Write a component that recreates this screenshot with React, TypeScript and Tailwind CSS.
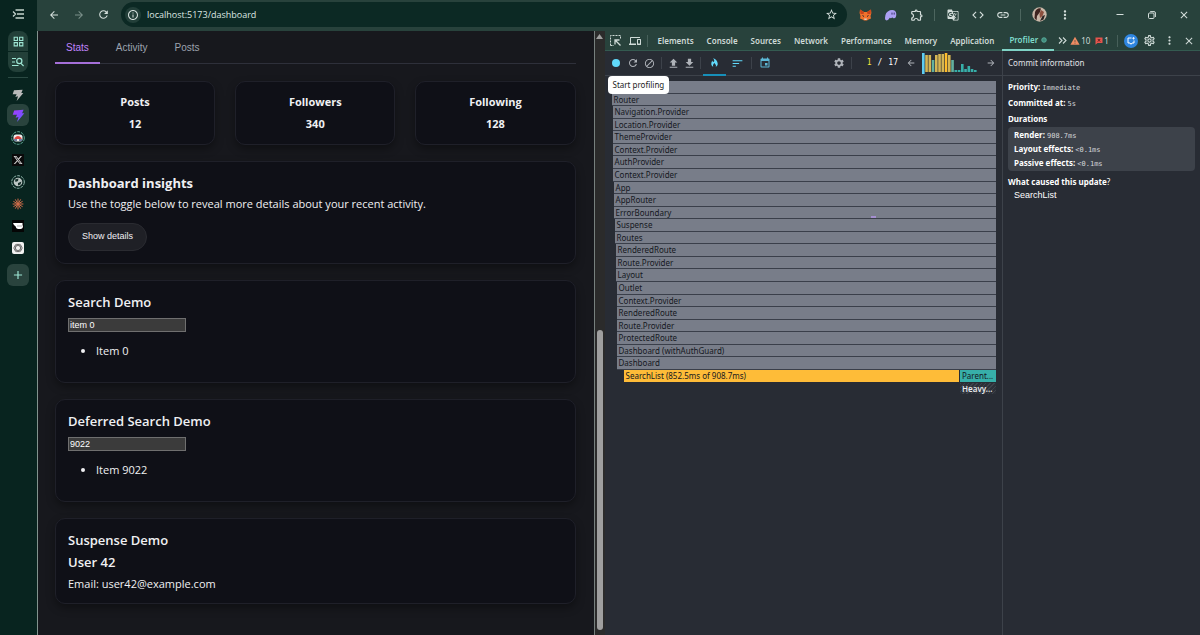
import { useState } from 'react';
import type { ReactNode } from 'react';
import clsx from 'clsx';
import {
  MdAdd,
  MdArrowBack,
  MdArrowForward,
  MdBlock,
  MdClose,
  MdCode,
  MdDevices,
  MdEvent,
  MdFileDownload,
  MdFileUpload,
  MdGTranslate,
  MdInfoOutline,
  MdLink,
  MdMoreVert,
  MdOutlineExtension,
  MdOutlineGridView,
  MdOutlineSettings,
  MdRefresh,
  MdSettings,
  MdSort,
  MdStarBorder,
  MdWarning,
} from 'react-icons/md';
import { FaXTwitter } from 'react-icons/fa6';

const BOLT = 'M3 2 L16 1 L14 6 L17 6 L7 18 L9 11 L5 12 L7 8 L1 8 Z';

const devtoolsTabs = [
  'Elements',
  'Console',
  'Sources',
  'Network',
  'Performance',
  'Memory',
  'Application',
];

const flameRows = [
  { name: '', indent: 'ml-0' },
  { name: 'Router', indent: 'ml-0' },
  { name: 'Navigation.Provider', indent: 'ml-px' },
  { name: 'Location.Provider', indent: 'ml-px' },
  { name: 'ThemeProvider', indent: 'ml-px' },
  { name: 'Context.Provider', indent: 'ml-px' },
  { name: 'AuthProvider', indent: 'ml-px' },
  { name: 'Context.Provider', indent: 'ml-px' },
  { name: 'App', indent: 'ml-0.5' },
  { name: 'AppRouter', indent: 'ml-0.5' },
  { name: 'ErrorBoundary', indent: 'ml-0.5' },
  { name: 'Suspense', indent: 'ml-[3px]' },
  { name: 'Routes', indent: 'ml-[3px]' },
  { name: 'RenderedRoute', indent: 'ml-1' },
  { name: 'Route.Provider', indent: 'ml-1' },
  { name: 'Layout', indent: 'ml-1' },
  { name: 'Outlet', indent: 'ml-[5px]' },
  { name: 'Context.Provider', indent: 'ml-[5px]' },
  { name: 'RenderedRoute', indent: 'ml-[5px]' },
  { name: 'Route.Provider', indent: 'ml-[5px]' },
  { name: 'ProtectedRoute', indent: 'ml-[5px]' },
  { name: 'Dashboard (withAuthGuard)', indent: 'ml-[5px]' },
  { name: 'Dashboard', indent: 'ml-[5px]' },
];

const commits = [20, 17, 17, 12, 17, 18, 18, 19, 17, 12, 2, 2, 8, 3, 6, 3, 2];

const stats = [
  { label: 'Posts', value: 12 },
  { label: 'Followers', value: 340 },
  { label: 'Following', value: 128 },
];

function IconButton({
  label,
  className,
  children,
}: {
  label: string;
  className: string;
  children: ReactNode;
}) {
  return (
    <button
      aria-label={label}
      className={clsx('flex shrink-0 items-center justify-center', className)}
    >
      {children}
    </button>
  );
}

function Divider({ className }: { className: string }) {
  return <span className={clsx('h-3 w-px shrink-0', className)} />;
}

function Rail() {
  return (
    <nav className="flex w-[37px] shrink-0 flex-col items-center bg-[#08241f] pr-px text-[#9ee6d4]">
      <IconButton label="Expand tabs" className="h-[31px] w-full pb-[3px] text-[#c3d3cd]">
        <svg width="12" height="10" viewBox="0 0 12 10" fill="none" stroke="currentColor" strokeWidth="1.3">
          <path d="M1 2.5 L3.5 5 L1 7.5 M3.5 1 H12 M5 5 H12 M3.5 9 H12" />
        </svg>
      </IconButton>
      <div className="flex w-5 flex-col gap-px overflow-hidden rounded-lg">
        <IconButton label="Tab groups" className="h-5 bg-[#234039]">
          <MdOutlineGridView size={13} />
        </IconButton>
        <IconButton label="Search tabs" className="h-5 bg-[#234039]">
          <svg width="12" height="10" viewBox="0 0 12 10" fill="none" stroke="currentColor" strokeWidth="1.2">
            <path d="M0 1.5 H4 M0 5 H3 M0 8.5 H6.5 M9 6.3 L11.6 9" />
            <circle cx="7.3" cy="4" r="2.6" />
          </svg>
        </IconButton>
      </div>
      <span className="mt-[5px] mb-1 h-px w-5 bg-[#2b4a43]" />
      <div className="flex flex-col gap-px">
        <IconButton label="Vite app" className="h-[21px] w-[22px] pt-1">
          <svg width="12" height="12" viewBox="0 0 18 18">
            <path d={BOLT} fill="#b9b9b9" />
          </svg>
        </IconButton>
        <IconButton label="Dashboard" className="h-[22px] w-[22px] rounded-md bg-[#29433d]">
          <svg width="13" height="13" viewBox="0 0 18 18">
            <defs>
              <linearGradient id="bolt" x1="0" y1="0" x2="1" y2="1">
                <stop offset="0" stopColor="#a63cff" />
                <stop offset="0.6" stopColor="#7c4dff" />
                <stop offset="1" stopColor="#47bfff" />
              </linearGradient>
            </defs>
            <path d={BOLT} fill="url(#bolt)" />
          </svg>
        </IconButton>
        <IconButton label="Discord" className="h-[21px] w-[22px]">
          <svg width="14" height="14" viewBox="0 0 14 14">
            <circle cx="7" cy="7" r="6.3" fill="none" stroke="#5fa593" strokeDasharray="3 1" />
            <rect x="2.5" y="3.5" width="9" height="7" rx="2.5" fill="#f1eeee" />
            <path d="M3.5 7 Q7 3 10.5 7 V8 H3.5 Z" fill="#e0453f" />
            <path d="M3 9 H11" stroke="#475a86" strokeWidth="1.4" strokeDasharray="3 2" />
          </svg>
        </IconButton>
        <IconButton label="X" className="h-[21px] w-[22px]">
          <span className="flex size-3 items-center justify-center bg-[#0a0a0a] text-[#d6d6d6]">
            <FaXTwitter size={10} />
          </span>
        </IconButton>
        <IconButton label="GitHub" className="h-[21px] w-[22px]">
          <svg width="14" height="14" viewBox="0 0 14 14">
            <circle cx="7" cy="7" r="6.3" fill="none" stroke="#8fb5ab" strokeDasharray="3 1" />
            <circle cx="7" cy="7" r="4.3" fill="#bcc6c4" />
            <path d="M4 4.5 L7.5 3.5 L7 6 L4.5 7 Z M7 8 L10.5 6.5 L9.5 9.5 L7 10.5 Z" fill="#17302b" />
          </svg>
        </IconButton>
        <IconButton label="Claude" className="h-[21px] w-[22px]">
          <svg width="12" height="12" viewBox="-6 -6 12 12" stroke="#cf6d4a" strokeWidth="1" strokeLinecap="round">
            <path d="M0 -5 V5 M-5 0 H5 M-4.3 -2.5 L4.3 2.5 M-4.3 2.5 L4.3 -2.5 M-2.5 -4.3 L2.5 4.3 M2.5 -4.3 L-2.5 4.3" />
          </svg>
        </IconButton>
        <IconButton label="Zed" className="h-[21px] w-[22px]">
          <svg width="12" height="12" viewBox="0 0 12 12">
            <rect width="12" height="12" fill="#050505" />
            <path d="M1 3 H10.5 V5.4 H11 V7 Q10.5 9 8.5 9 H6 Q4 8.6 3.5 6.2 Q1.6 5.4 1 3 Z" fill="#fff" />
            <path d="M5 6 H10.5" stroke="#777" strokeWidth="0.6" />
          </svg>
        </IconButton>
        <IconButton label="ChatGPT" className="h-[21px] w-[22px]">
          <svg width="12" height="12" viewBox="0 0 12 12">
            <rect width="12" height="12" rx="2" fill="#f2f2f2" />
            <g fill="none" stroke="#444" strokeWidth="0.6">
              <ellipse cx="6" cy="6" rx="4.2" ry="2.4" />
              <ellipse cx="6" cy="6" rx="4.2" ry="2.4" transform="rotate(60 6 6)" />
              <ellipse cx="6" cy="6" rx="4.2" ry="2.4" transform="rotate(120 6 6)" />
            </g>
          </svg>
        </IconButton>
      </div>
      <IconButton label="New tab" className="mt-1.5 size-[22px] rounded-md bg-[#29433d]">
        <MdAdd size={14} />
      </IconButton>
    </nav>
  );
}

function BrowserBar() {
  return (
    <header className="flex h-[31px] shrink-0 items-center bg-[#28423c] pb-0.5 text-[#d5dfdc]">
      <IconButton label="Back" className="ml-1 w-[25px]">
        <MdArrowBack size={12} />
      </IconButton>
      <IconButton label="Forward" className="w-[25px] text-[#7a8f89]">
        <MdArrowForward size={12} />
      </IconButton>
      <IconButton label="Reload" className="w-[25px]">
        <MdRefresh size={13} />
      </IconButton>
      <div className="ml-[5px] flex h-[25px] flex-1 items-center rounded-full bg-[#0c2924] px-1">
        <IconButton label="Site information" className="size-4 rounded-full bg-[#233f39]">
          <MdInfoOutline size={12} />
        </IconButton>
        <input
          aria-label="Address"
          defaultValue="localhost:5173/dashboard"
          className="ml-1.5 min-w-0 flex-1 bg-transparent text-[9px] text-[#dce5e2] outline-none"
        />
        <IconButton label="Bookmark" className="w-6">
          <MdStarBorder size={13} />
        </IconButton>
      </div>
      <IconButton label="MetaMask" className="ml-1.5 w-[25px]">
        <svg width="13" height="12" viewBox="0 0 13 12">
          <path d="M1 0.5 L5 3 H8 L12 0.5 L12.4 4 L11.5 7 L12 9.5 L9.5 10.5 L8 11.5 H5 L3.5 10.5 L1 9.5 L1.5 7 L0.6 4 Z" fill="#f0712c" />
          <path d="M1 0.5 L5 3 L4.5 5 L1.5 5 Z M12 0.5 L8 3 L8.5 5 L11.5 5 Z" fill="#c9431a" />
          <path d="M3.5 6.5 L5 7.5 M9.5 6.5 L8 7.5" stroke="#23283a" />
          <path d="M5 9.5 H8 L7.5 11 H5.5 Z" fill="#d9ccbf" />
        </svg>
      </IconButton>
      <IconButton label="Phantom" className="w-[25px]">
        <svg width="13" height="12" viewBox="0 0 13 12">
          <path d="M1 9 Q1 3 6 1.2 Q12 0 12.3 5 Q12.3 9.5 9.8 9.3 Q8.6 9 8.3 8.2 Q7 10 5.8 8.8 Q3.6 12.4 1.6 11 Q1 10.4 1 9 Z" fill="#ab9ff2" />
          <path d="M8 3.6 V5.6 M10.2 3.6 V5.6" stroke="#3b3570" />
        </svg>
      </IconButton>
      <IconButton label="Extensions" className="w-[27px]">
        <MdOutlineExtension size={14} />
      </IconButton>
      <Divider className="mx-1 bg-[#4d665f]" />
      <IconButton label="Translate" className="ml-px w-[25px]">
        <MdGTranslate size={12} />
      </IconButton>
      <IconButton label="View source" className="w-[25px]">
        <MdCode size={14} />
      </IconButton>
      <IconButton label="Copy link" className="w-[25px]">
        <MdLink size={14} />
      </IconButton>
      <Divider className="mx-[5px] bg-[#4d665f]" />
      <IconButton label="Profile" className="w-[27px]">
        <svg width="15" height="15" viewBox="0 0 15 15">
          <circle cx="7.5" cy="7.5" r="7.2" fill="#c9b7a8" />
          <path d="M3 5 Q5 0.5 9 1.5 L8 5 L5 9 L4.5 13.5 L2.5 11 Z" fill="#3f2420" />
          <path d="M9 3 L12 5 L10.5 9 L8 11 L7.5 7 Z" fill="#8c4f3e" />
          <path d="M10.5 9 L13 8 L11.5 12.5 L8 14 Z" fill="#2d2524" />
        </svg>
      </IconButton>
      <IconButton label="Menu" className="w-6">
        <MdMoreVert size={14} />
      </IconButton>
      <IconButton label="Minimize" className="ml-[27px] w-8">
        <svg width="8" height="8" viewBox="0 0 8 8" stroke="currentColor">
          <path d="M0.5 3.5 H7.5" />
        </svg>
      </IconButton>
      <IconButton label="Restore" className="w-8">
        <svg width="8" height="8" viewBox="0 0 8 8" fill="none" stroke="currentColor">
          <rect x="0.5" y="2" width="5.5" height="5.5" rx="1" />
          <path d="M2.2 0.6 H6 Q7.4 0.6 7.4 2 V6" />
        </svg>
      </IconButton>
      <IconButton label="Close window" className="w-8">
        <MdClose size={12} />
      </IconButton>
    </header>
  );
}

function Card({ className, children }: { className?: string; children: ReactNode }) {
  return (
    <section
      className={clsx(
        'rounded-[10px] border border-[#1f2029] bg-[#0f1017] px-3 shadow-[0_4px_8px_rgba(0,0,0,0.35)]',
        className,
      )}
    >
      {children}
    </section>
  );
}

function SearchCard({ title, initial, result }: { title: string; initial: string; result: string }) {
  const [query, setQuery] = useState(initial);

  return (
    <Card className="pt-3 pb-[22px]">
      <h2 className="text-[13px] leading-[18px] font-semibold">{title}</h2>
      <input
        aria-label={title}
        value={query}
        onChange={(e) => setQuery(e.target.value)}
        className="mt-[7px] block h-3.5 w-[118px] border border-[#6f6f6f] bg-[#3b3b3b] px-px font-['Liberation_Sans',sans-serif] text-[9px] text-white outline-none"
      />
      <ul className="mt-2.5 list-disc pl-7 text-[11px] leading-[18px]">
        <li>{result}</li>
      </ul>
    </Card>
  );
}

function DashboardPage() {
  const [tab, setTab] = useState('Stats');

  return (
    <main className="pr-[18px] pl-[17px] text-[#f0f0f3]">
      <div className="flex gap-[5px] border-b border-[#2e303a] font-['Liberation_Sans',sans-serif] text-[10px]">
        {['Stats', 'Activity', 'Posts'].map((name) => (
          <button
            key={name}
            onClick={() => setTab(name)}
            className={clsx(
              '-mb-px border-b-2 px-[11px] pt-2.5 pb-[7px] leading-[14px]',
              tab === name ? 'border-[#a56fd8] text-[#c084fc]' : 'border-transparent text-[#9ca3af]',
            )}
          >
            {name}
          </button>
        ))}
      </div>

      <div className="mt-[17px] grid grid-cols-3 gap-5 text-center text-[11px] leading-[22px] font-bold">
        {stats.map((s) => (
          <Card key={s.label} className="py-[9px]">
            <div>{s.label}</div>
            <div>{s.value}</div>
          </Card>
        ))}
      </div>

      <div className="mt-4 flex flex-col gap-4">
        <Card className="py-3">
          <h2 className="text-[13px] leading-[18px] font-bold">Dashboard insights</h2>
          <p className="mt-[3px] text-[11px] leading-[18px]">
            Use the toggle below to reveal more details about your recent activity.
          </p>
          <button className="mt-2.5 h-7 rounded-full border border-[#2a2b31] bg-[#1f2026] px-[13px] font-['Liberation_Sans',sans-serif] text-[9px]">
            Show details
          </button>
        </Card>
        <SearchCard title="Search Demo" initial="item 0" result="Item 0" />
        <SearchCard title="Deferred Search Demo" initial="9022" result="Item 9022" />
        <Card className="flex flex-col gap-1 pt-3 pb-2.5">
          <h2 className="text-[13px] leading-[18px] font-semibold">Suspense Demo</h2>
          <h3 className="text-[13px] leading-[18px] font-semibold">User 42</h3>
          <p className="text-[11px] leading-[18px]">Email: user42@example.com</p>
        </Card>
      </div>
    </main>
  );
}

function DevtoolsTabs() {
  return (
    <div className="flex h-5 shrink-0 items-center border-b border-[#345a50] bg-[#28423c] text-[8px] font-semibold text-[#cfdad7]">
      <IconButton label="Inspect" className="ml-px w-5">
        <svg width="11" height="11" viewBox="0 0 11 11" fill="none" stroke="currentColor">
          <path d="M0.5 10.5 V0.5 H10.5 V4" strokeDasharray="2 1" />
          <path d="M0.5 10.5 H4" strokeDasharray="2 1" />
          <path d="M10.5 10.5 L5 5 M5 9.5 V5 H9.5" strokeWidth="1.3" />
        </svg>
      </IconButton>
      <IconButton label="Device toolbar" className="w-[18px]">
        <MdDevices size={12} />
      </IconButton>
      <Divider className="mx-[3px] bg-[#47605a]" />
      {devtoolsTabs.map((name) => (
        <button key={name} className="h-full pr-1.5 pl-[7px]">
          {name}
        </button>
      ))}
      <button className="-mb-px ml-0.5 flex h-5 items-center gap-[3px] border-b-2 border-[#7fd3c6] px-[7px] text-[#7fdccb]">
        Profiler
        <svg width="6" height="6" viewBox="0 0 6 6">
          <circle cx="3" cy="3" r="2.3" fill="#3f8c7c" stroke="#5fb5a4" strokeWidth="0.8" />
        </svg>
      </button>
      <IconButton label="More tabs" className="w-4">
        <svg width="9" height="7" viewBox="0 0 9 7" fill="none" stroke="currentColor" strokeWidth="1.1">
          <path d="M1 0.5 L4 3.5 L1 6.5 M5 0.5 L8 3.5 L5 6.5" />
        </svg>
      </IconButton>
      <div className="ml-auto flex items-center gap-px font-normal">
        <MdWarning size={10} className="text-[#ef8b62]" />
        <span>10</span>
        <svg width="8" height="8" viewBox="0 0 8 8" className="ml-1">
          <path d="M0.5 0.5 H7.5 V6 H2.5 L0.5 7.8 Z" fill="#e4554d" />
          <path d="M2.8 2 L5.2 4.6 M5.2 2 L2.8 4.6" stroke="#5c1d1d" />
        </svg>
        <span>1</span>
      </div>
      <Divider className="mr-1 ml-2 bg-[#47605a]" />
      <IconButton label="AI assistance" className="mx-0.5 size-3.5 rounded-full bg-[#2f86e0] text-white">
        <svg width="8" height="8" viewBox="0 0 8 8" fill="none" stroke="currentColor">
          <path d="M4.5 1 H1 V6 H3 L4 7.3 L5 6 H7 V3.5" />
          <path d="M6.5 0 V2.6 M5.2 1.3 H7.8" strokeWidth="0.8" />
        </svg>
      </IconButton>
      <IconButton label="DevTools settings" className="w-5">
        <MdOutlineSettings size={13} />
      </IconButton>
      <IconButton label="DevTools menu" className="w-5">
        <MdMoreVert size={13} />
      </IconButton>
      <IconButton label="Close DevTools" className="mr-1 w-[18px]">
        <MdClose size={12} />
      </IconButton>
    </div>
  );
}

function CommitChart() {
  return (
    <svg width="56" height="22" viewBox="0 0 56 22">
      {commits.map((height, i) => (
        <rect
          key={i}
          x={i * 3.25}
          y={i === 0 ? 1 : 20 - height}
          width="2.6"
          height={i === 0 ? 21 : height}
          fill={i === 0 ? '#5ecdf2' : i === 7 ? '#febc2c' : height > 15 ? '#d4b553' : height > 10 ? '#63b19e' : '#37afa9'}
        />
      ))}
    </svg>
  );
}

function ProfilerToolbar() {
  return (
    <div className="relative flex h-[25px] shrink-0 items-center border-b border-[#3d424a] text-[#afb3b9]">
      <IconButton label="Start profiling" className="ml-[3px] w-[17px]">
        <span className="size-2 rounded-full bg-[#61dafb]" />
      </IconButton>
      <IconButton label="Reload and start profiling" className="w-4">
        <MdRefresh size={12} />
      </IconButton>
      <IconButton label="Clear profiling data" className="w-[17px]">
        <MdBlock size={11} />
      </IconButton>
      <Divider className="mx-[3px] bg-[#3d424a]" />
      <IconButton label="Load profile" className="w-[17px]">
        <MdFileUpload size={13} />
      </IconButton>
      <IconButton label="Save profile" className="w-4">
        <MdFileDownload size={13} />
      </IconButton>
      <Divider className="mx-0.5 bg-[#3d424a]" />
      <IconButton label="Flamegraph" className="-mb-px h-[25px] w-[23px] border-b-2 border-[#178fb9] text-[#61dafb]">
        <svg width="11" height="11" viewBox="0 0 24 24" fill="currentColor">
          <path d="M10 21.5 C7.1 20.7 5 18 5 15 C5 14 5 9.8 7.8 7.4 C7.8 7.4 7.6 11.2 10 10.6 C11.1 10.3 13 7.6 8.9 2.5 C14.2 3 19 9.3 19 15 C19 18 16.9 20.7 14 21.5 C14.8 20.9 15.3 20 15.3 18.9 C15.3 16.6 12.4 15 12.4 13 C10 14.5 8.7 16.8 8.7 18.9 C8.7 20 9.2 20.9 10 21.5 Z" />
        </svg>
      </IconButton>
      <IconButton label="Ranked" className="w-[23px] text-[#61dafb]">
        <MdSort size={13} />
      </IconButton>
      <Divider className="mx-0.5 bg-[#3d424a]" />
      <IconButton label="Timeline" className="w-[23px] text-[#5cb8d6]">
        <MdEvent size={12} />
      </IconButton>
      <IconButton label="Profiler settings" className="ml-auto w-[23px]">
        <MdSettings size={12} />
      </IconButton>
      <Divider className="bg-[#3d424a]" />
      <span className="mr-1.5 ml-[15px] flex gap-1.5 font-['DejaVu_Sans_Mono',monospace] text-[8px] text-white">
        <span className="text-[#f2e63c]">1</span>
        <span>/</span>
        <span>17</span>
      </span>
      <IconButton label="Previous commit" className="w-[14px]">
        <MdArrowBack size={10} />
      </IconButton>
      <span className="mr-1.5 ml-1">
        <CommitChart />
      </span>
      <IconButton label="Next commit" className="mr-1 w-[14px]">
        <MdArrowForward size={10} />
      </IconButton>
      <div
        role="tooltip"
        className="absolute top-[25px] left-[3px] z-10 rounded-sm bg-white px-[5px] text-[8px] leading-[18px] text-[#222]"
      >
        Start profiling
      </div>
    </div>
  );
}

function Flamegraph() {
  return (
    <div className="relative mt-[5px] mr-1.5 ml-[7px] flex h-[313px] flex-col text-[8px] leading-[12px] text-[#15181e]">
      {flameRows.map((row, i) => (
        <div key={i} className={clsx('min-h-0 flex-1 border-b border-[#3a3f4a] bg-[#787d89] px-0.5', row.indent)}>
          {row.name}
        </div>
      ))}
      <div className="ml-3 flex min-h-0 flex-1 gap-px pb-px">
        <div className="min-w-0 flex-1 bg-[#febc38] px-0.5">SearchList (852.5ms of 908.7ms)</div>
        <div className="w-9 bg-[#37afa9] px-0.5">Parent...</div>
      </div>
      <div className="flex min-h-0 flex-1 justify-end">
        <div className="w-9 bg-[repeating-linear-gradient(135deg,#3d424a_0px,#3d424a_1px,#2c3038_1px,#2c3038_3px)] px-0.5 font-semibold text-[#e8eaed]">
          Heavy...
        </div>
      </div>
      <span className="absolute top-[135px] left-[259px] h-0.5 w-[5px] bg-[#a58fd0]" />
    </div>
  );
}

function Mono({ children }: { children: ReactNode }) {
  return (
    <span className="font-['DejaVu_Sans_Mono',monospace] text-[7px] leading-none font-normal text-[#d5d7db]">
      {children}
    </span>
  );
}

function CommitInfo() {
  return (
    <aside className="w-[198px] shrink-0 border-l border-[#3d424a] text-[8px] text-white">
      <h2 className="h-[25px] border-b border-[#3d424a] pl-[5px] leading-[24px] text-[#e0e2e6]">
        Commit information
      </h2>
      <div className="px-[5px] pt-[3px] leading-4 font-bold">
        <p>
          Priority: <Mono>Immediate</Mono>
        </p>
        <p>
          Committed at: <Mono>5s</Mono>
        </p>
        <p>Durations</p>
        <div className="rounded-sm bg-[#3d424a] px-1.5 py-px leading-[14px]">
          <p>
            Render: <Mono>908.7ms</Mono>
          </p>
          <p>
            Layout effects: <Mono>&lt;0.1ms</Mono>
          </p>
          <p>
            Passive effects: <Mono>&lt;0.1ms</Mono>
          </p>
        </div>
        <p className="mt-[3px]">
          What caused this update<span className="font-normal">?</span>
        </p>
        <button className="block px-1.5 font-['Liberation_Sans',sans-serif] text-[9px] leading-[10px] font-normal">
          SearchList
        </button>
      </div>
    </aside>
  );
}

export default function App() {
  return (
    <div className="flex min-h-screen bg-[#08241f] font-['Open_Sans',sans-serif]">
      <Rail />
      <div className="flex min-w-0 flex-1 flex-col">
        <BrowserBar />
        <div className="flex flex-1">
          <div className="min-w-0 flex-[556] border-l border-[#82938e] bg-[#17181d]">
            <DashboardPage />
          </div>
          <div className="flex min-w-0 flex-[607]">
            <div className="flex w-[11px] shrink-0 flex-col items-center border-l border-[#77807e] bg-[#2b2b2b] pt-[3px] pb-[5px]">
              <svg width="7" height="5" viewBox="0 0 7 5">
                <path d="M3.5 0 L7 5 H0 Z" fill="#9f9f9f" />
              </svg>
              <span className="mt-auto h-[300px] w-1.5 rounded-full bg-[#9f9f9f]" />
            </div>
            <div className="flex min-w-0 flex-1 flex-col bg-[#282c34] font-['Noto_Sans',sans-serif]">
              <DevtoolsTabs />
              <div className="flex flex-1">
                <div className="min-w-0 flex-1">
                  <ProfilerToolbar />
                  <Flamegraph />
                </div>
                <CommitInfo />
              </div>
            </div>
          </div>
        </div>
      </div>
    </div>
  );
}
